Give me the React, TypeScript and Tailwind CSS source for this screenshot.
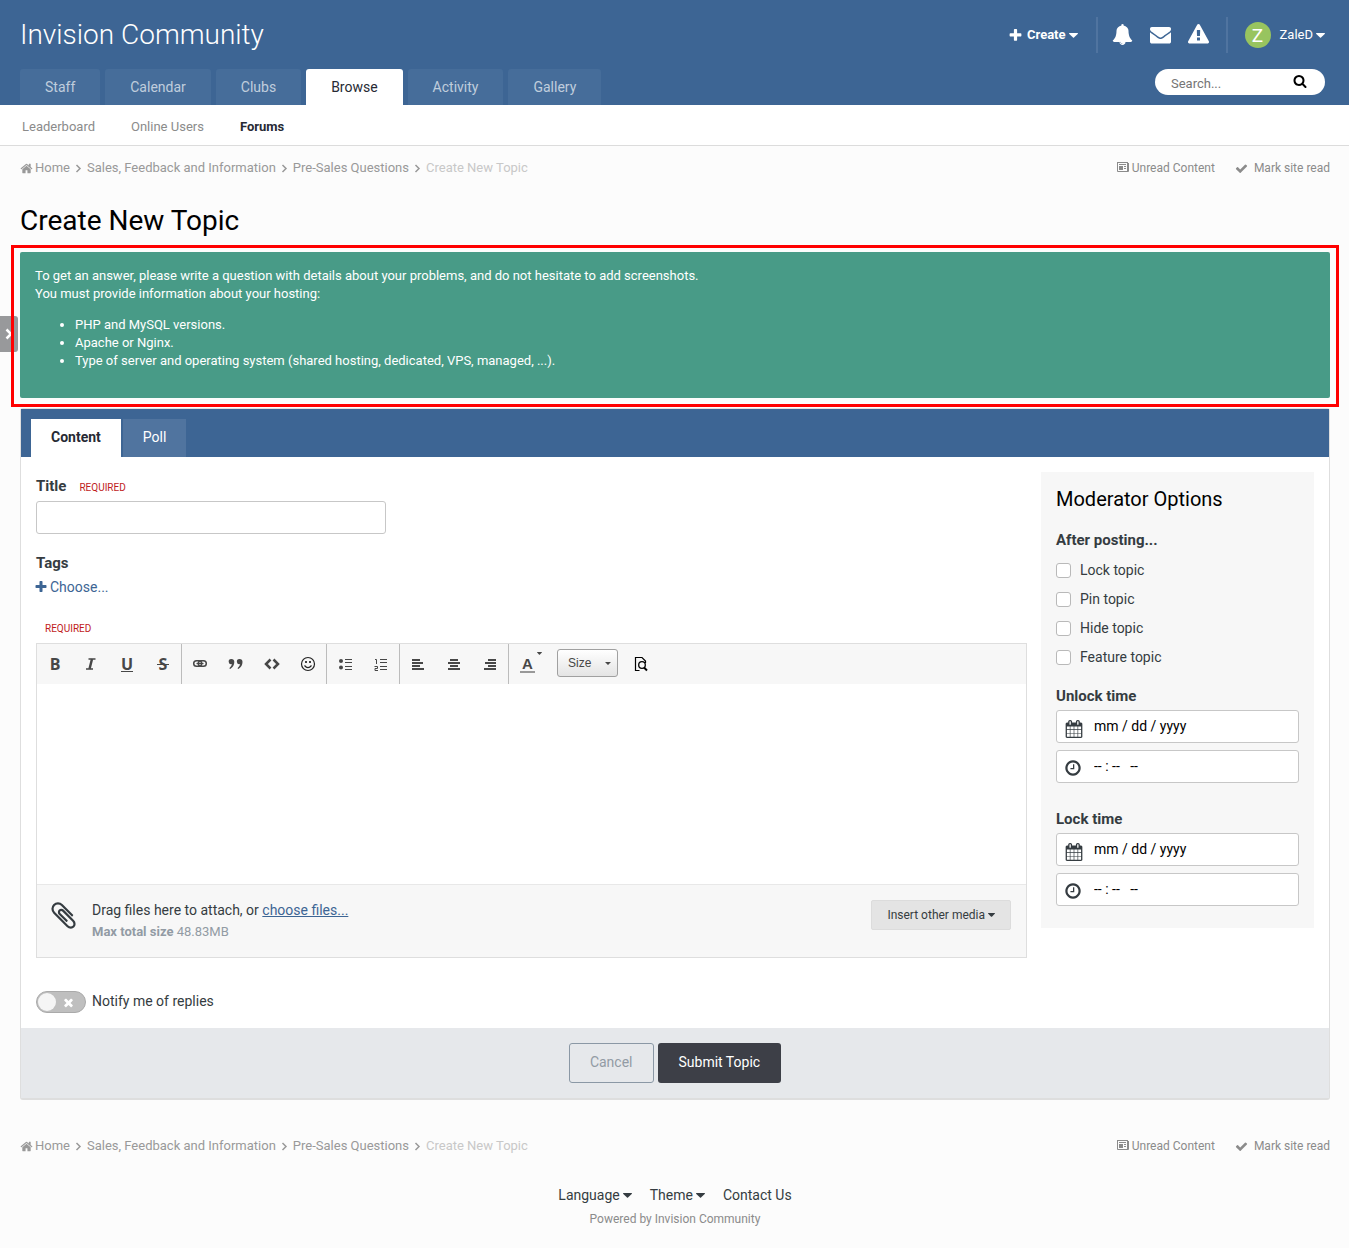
import React from "react";

const ICONS = {
  plus: "M1600 736v192q0 40-28 68t-68 28h-416v416q0 40-28 68t-68 28h-192q-40 0-68-28t-28-68v-416h-416q-40 0-68-28t-28-68v-192q0-40 28-68t68-28h416v-416q0-40 28-68t68-28h192q40 0 68 28t28 68v416h416q40 0 68 28t28 68z",
  search:
    "M1216 832q0-185-131.5-316.5t-316.5-131.5-316.5 131.5-131.5 316.5 131.5 316.5 316.5 131.5 316.5-131.5 131.5-316.5zm512 832q0 52-38 90t-90 38q-54 0-90-38l-343-342q-179 124-399 124-143 0-273.5-55.5t-225-150-150-225-55.5-273.5 55.5-273.5 150-225 225-150 273.5-55.5 273.5 55.5 225 150 150 225 55.5 273.5q0 220-124 399l343 343q37 37 37 90z",
  home: "M1472 992v480q0 26-19 45t-45 19h-384v-384h-256v384h-384q-26 0-45-19t-19-45v-480q0-1 .5-3t.5-3l575-474 575 474q1 2 1 6zm223-69l-62 74q-8 9-21 11h-3q-13 0-21-7l-692-577-692 577q-12 8-24 7-13-2-21-11l-62-74q-8-10-7-23.5t11-21.5l719-599q32-26 76-26t76 26l244 204v-195q0-14 9-23t23-9h192q14 0 23 9t9 23v408l219 182q10 8 11 21.5t-7 23.5z",
  check:
    "M1671 566q0 40-28 68l-724 724-136 136q-28 28-68 28t-68-28l-136-136-362-362q-28-28-28-68t28-68l136-136q28-28 68-28t68 28l294 295 656-657q28-28 68-28t68 28l136 136q28 28 28 68z",
  envelope:
    "M1792 710v794q0 66-47 113t-113 47h-1472q-66 0-113-47t-47-113v-794q44 49 101 87 362 246 497 345 57 42 92.5 65.5t94.5 48 110 24.5h2q51 0 110-24.5t94.5-48 92.5-65.5q170-123 498-345 57-39 100-87zm0-294q0 79-49 151t-122 123q-376 261-468 325-10 7-42.5 31t-54 38.5-52 32.5-57.5 27-50 9h-2q-23 0-50-9t-57.5-27-52-32.5-54-38.5-42.5-31q-91-64-262-182.5t-205-142.5q-62-42-117-115.5t-55-136.5q0-78 41.5-130t118.5-52h1472q65 0 112.5 47t47.5 113z",
  warning:
    "M1024 1375v-190q0-14-9.5-23.5t-22.5-9.5h-192q-13 0-22.5 9.5t-9.5 23.5v190q0 14 9.5 23.5t22.5 9.5h192q13 0 22.5-9.5t9.5-23.5zm-2-374l18-459q0-12-10-19-13-11-24-11h-220q-11 0-24 11-10 7-10 21l17 457q0 10 10 16.5t24 6.5h185q14 0 23.5-6.5t10.5-16.5zm-14-934l768 1408q35 63-2 126-17 29-46.5 46t-63.5 17h-1536q-34 0-63.5-17t-46.5-46q-37-63-2-126l768-1408q17-31 47-49t65-18 65 18 47 49z",
  bell: "M912 1696q0-16-16-16-59 0-101.5-42.5t-42.5-101.5q0-16-16-16t-16 16q0 73 51.5 124.5t124.5 51.5q16 0 16-16zm816-288q0 52-38 90t-90 38h-448q0 106-75 181t-181 75-181-75-75-181h-448q-52 0-90-38t-38-90q50-42 91-88t85-119.5 74.5-158.5 50-206 19.5-260q0-152 117-282.5t307-158.5q-8-19-8-39 0-40 28-68t68-28 68 28 28 68q0 20-8 39 190 28 307 158.5t117 282.5q0 139 19.5 260t50 206 74.5 158.5 85 119.5 91 88z",
  calendar:
    "M192 1664h288v-288h-288v288zm352 0h320v-288h-320v288zm-352-352h288v-320h-288v320zm352 0h320v-320h-320v320zm-352-384h288v-288h-288v288zm736 736h320v-288h-320v288zm-384-736h320v-288h-320v288zm768 736h288v-288h-288v288zm-384-352h320v-320h-320v320zm-352-864v-288q0-13-9.5-22.5t-22.5-9.5h-64q-13 0-22.5 9.5t-9.5 22.5v288q0 13 9.5 22.5t22.5 9.5h64q13 0 22.5-9.5t9.5-22.5zm736 864h288v-320h-288v320zm-384-384h320v-288h-320v288zm384 0h288v-288h-288v288zm32-480v-288q0-13-9.5-22.5t-22.5-9.5h-64q-13 0-22.5 9.5t-9.5 22.5v288q0 13 9.5 22.5t22.5 9.5h64q13 0 22.5-9.5t9.5-22.5zm384-64v1280q0 52-38 90t-90 38h-1408q-52 0-90-38t-38-90v-1280q0-52 38-90t90-38h128v-96q0-66 47-113t113-47h64q66 0 113 47t47 113v96h384v-96q0-66 47-113t113-47h64q66 0 113 47t47 113v96h128q52 0 90 38t38 90z",
  clock:
    "M1024 544v448q0 14-9 23t-23 9h-320q-14 0-23-9t-9-23v-64q0-14 9-23t23-9h224v-352q0-14 9-23t23-9h64q14 0 23 9t9 23zm416 352q0-148-73-273t-198-198-273-73-273 73-198 198-73 273 73 273 198 198 273 73 273-73 198-198 73-273zm224 0q0 209-103 385.5t-279.5 279.5-385.5 103-385.5-103-279.5-279.5-103-385.5 103-385.5 279.5-279.5 385.5-103 385.5 103 279.5 279.5 103 385.5z",
  newspaper:
    "M1024 512h-384v384h384v-384zm128 640v128h-640v-128h640zm0-768v640h-640v-640h640zm640 768v128h-512v-128h512zm0-256v128h-512v-128h512zm0-256v128h-512v-128h512zm0-256v128h-512v-128h512zm-1536 960v-960h-128v960q0 26 19 45t45 19 45-19 19-45zm1664 0v-1088h-1536v1088q0 33-11 64h1483q26 0 45-19t19-45zm128-1216v1216q0 80-56 136t-136 56h-1664q-80 0-136-56t-56-136v-1088h256v-128h1792z",
  paperclip:
    "M1596 1385q0 117-79 196t-196 79q-135 0-235-100l-777-776q-113-115-113-271 0-159 110-270t269-111q158 0 273 113l605 606q10 10 10 22 0 16-30.5 46.5t-46.5 30.5q-13 0-23-10l-606-607q-79-77-181-77-106 0-179 75t-73 181q0 105 76 181l776 777q63 63 145 63 64 0 106-42t42-106q0-82-63-145l-581-581q-26-24-60-24-29 0-48 19t-19 48q0 32 25 59l410 410q10 10 10 22 0 16-31 47t-47 31q-12 0-22-10l-410-410q-63-61-63-149 0-82 57-139t139-57q88 0 149 63l581 581q100 98 100 235z",
  times:
    "M1490 1322q0 40-28 68l-136 136q-28 28-68 28t-68-28l-294-294-294 294q-28 28-68 28t-68-28l-136-136q-28-28-28-68t28-68l294-294-294-294q-28-28-28-68t28-68l136-136q28-28 68-28t68 28l294 294 294-294q28-28 68-28t68 28l136 136q28 28 28 68t-28 68l-294 294 294 294q28 28 28 68z",
  angle:
    "M1171 960q0 13-10 23l-466 466q-10 10-23 10t-23-10l-50-50q-10-10-10-23t10-23l393-393-393-393q-10-10-10-23t10-23l50-50q10-10 23-10t23 10l466 466q10 10 10 23z",
};

type IconProps = { name: keyof typeof ICONS; className?: string };

const Icon = ({ name, className = "" }: IconProps) => (
  <svg
    viewBox={name === "newspaper" ? "0 0 2048 1792" : "0 0 1792 1792"}
    fill="currentColor"
    aria-hidden="true"
    className={`shrink-0 ${className}`}
  >
    <path d={ICONS[name]} />
  </svg>
);

const Caret = ({ className = "w-[9px] h-[5px]" }) => (
  <svg viewBox="0 0 9 5" fill="currentColor" aria-hidden="true" className={`shrink-0 ${className}`}>
    <path d="M.3 0h8.4q.5.3 0 .9L5 4.6q-.5.4-1 0L.3.9Q-.2.3.3 0z" />
  </svg>
);

const Separator = () => (
  <svg viewBox="0 0 13 13" fill="none" stroke="currentColor" strokeWidth="1.5" aria-hidden="true" className="mx-[2px] size-[13px] shrink-0">
    <path d="M4.500 3L8 6.500L4.500 10" />
  </svg>
);

const tabs = ["Staff", "Calendar", "Clubs", "Browse", "Activity", "Gallery"];

const Header = () => (
  <header className="bg-[#3d6594] pl-5 pr-6">
    <div className="flex h-[69px] items-center justify-between">
      <a href="#" className="text-[28px] leading-[36px] font-light text-white">
        Invision Community
      </a>
      <div className="flex items-center text-[13px] text-white">
        <button className="flex items-center pt-px font-bold">
          <Icon name="plus" className="mr-1 size-[15px]" />
          Create
          <Caret className="ml-[3px] h-[5px] w-[9px]" />
        </button>
        <div className="ml-[18px] flex h-9 items-center gap-[17px] border-x-2 border-[#5074a0] pr-[17px] pl-[14px]">
          <button aria-label="Notifications">
            <Icon name="bell" className="size-[21px]" />
          </button>
          <button aria-label="Messages">
            <Icon name="envelope" className="size-[21px]" />
          </button>
          <button aria-label="Reports">
            <Icon name="warning" className="size-[21px]" />
          </button>
        </div>
        <button className="ml-[17px] flex items-center pt-px">
          <span className="mr-[9px] flex size-[26px] items-center justify-center rounded-full bg-[#98c45f] text-[19px] leading-none">
            Z
          </span>
          ZaleD
          <Caret className="ml-[3px] h-[5px] w-[9px]" />
        </button>
      </div>
    </div>
    <div className="flex items-start justify-between">
      <nav className="flex gap-[5px] text-sm">
        {tabs.map((tab) => (
          <a
            key={tab}
            href="#"
            className={`flex h-9 items-center rounded-t-[3px] px-[25px] ${
              tab === "Browse" ? "bg-white text-[#272a34]" : "bg-[#466d9a] text-[#c0cddd]"
            }`}
          >
            {tab}
          </a>
        ))}
      </nav>
      <form className="flex h-[26px] w-[170px] items-center rounded-full bg-white pr-[18px] pl-4">
        <input
          type="search"
          aria-label="Search"
          placeholder="Search..."
          className="min-w-0 grow pt-[3px] text-[13px] text-black outline-none placeholder:text-[#757575]"
        />
        <button type="button" aria-label="Submit search" className="pb-[3px]">
          <Icon name="search" className="size-[14px] text-black" />
        </button>
      </form>
    </div>
  </header>
);

const Breadcrumb = () => (
  <div className="flex h-5 items-center justify-between text-[13px] text-[#999]">
    <nav className="flex items-center" aria-label="Breadcrumb">
      <a href="#" className="flex items-center">
        <Icon name="home" className="mr-[2px] size-[13px]" />
        Home
      </a>
      <Separator />
      <a href="#">Sales, Feedback and Information</a>
      <Separator />
      <a href="#">Pre-Sales Questions</a>
      <Separator />
      <span className="text-[#c8c8c8]">Create New Topic</span>
    </nav>
    <div className="flex items-center text-xs text-[#8b8b8b]">
      <a href="#" className="flex items-center">
        <svg viewBox="0 0 12 10" fill="currentColor" aria-hidden="true" className="mr-[3px] mb-[2px] h-[10px] w-3">
          <path fillRule="evenodd" d="M0 0h11v1h1v8q0 1-1 1H1Q0 10 0 9zM1 1v8h9V1z" />
          <path d="M2 2h7v1H2zM2 4h4v4H2zM7 4h2v1H7zM7 6h2v1H7zM10 1h1v8h-1z" />
        </svg>
        Unread Content
      </a>
      <a href="#" className="ml-5 flex items-center">
        <Icon name="check" className="mr-[6px] size-[13px]" />
        Mark site read
      </a>
    </div>
  </div>
);

const ToolButton = ({ label, children }: { label: string; children: React.ReactNode }) => (
  <button
    type="button"
    aria-label={label}
    className="flex h-10 w-9 items-center justify-center font-['Open_Sans',sans-serif] text-base leading-none font-bold"
  >
    {children}
  </button>
);

const Lines = ({ rows }: { rows: number[][] }) => (
  <svg viewBox="0 0 16 16" className="size-4" stroke="currentColor" strokeWidth="2">
    {rows.map(([x1, x2], i) => (
      <path key={i} d={`M${x1} ${4 + i * 3}H${x2}`} />
    ))}
  </svg>
);

const Toolbar = () => (
  <div className="flex h-10 bg-[#f7f7f7] text-[#474747]">
    <div className="flex border-r border-[#bcbcbc]">
      <ToolButton label="Bold">B</ToolButton>
      <ToolButton label="Italic">
        <svg viewBox="0 0 16 16" className="size-4" stroke="currentColor" fill="none">
          <path d="M5.500 3h7M3 13h7" strokeWidth="1.600" />
          <path d="M9 3l-2.500 10" strokeWidth="2.400" />
        </svg>
      </ToolButton>
      <ToolButton label="Underline">
        <span className="border-b border-current leading-[14px]">U</span>
      </ToolButton>
      <ToolButton label="Strikethrough">
        <span className="relative">
          S
          <span className="absolute -inset-x-[2px] top-1/2 h-px bg-current" />
        </span>
      </ToolButton>
    </div>
    <div className="flex border-r border-[#bcbcbc]">
      <ToolButton label="Link">
        <svg viewBox="0 0 16 16" className="size-4" stroke="currentColor" fill="none" strokeWidth="1.500">
          <rect x="1.700" y="4.700" width="8" height="5.600" rx="2.800" />
          <rect x="6.300" y="4.700" width="8" height="5.600" rx="2.800" />
          <path d="M4.500 7.500h7" strokeWidth="1.200" />
        </svg>
      </ToolButton>
      <ToolButton label="Quote">
        <svg viewBox="0 0 16 16" className="size-4" fill="currentColor">
          <path d="M3.300 3a2.600 2.600 0 1 0 .7 5.100Q3.600 10.300 1.300 12.200l.9.800Q6.300 10.300 6.300 6 6.300 3 3.300 3zM11.500 3a2.600 2.600 0 1 0 .7 5.100q-.4 2.200-2.700 4.100l.9.800q4.100-2.700 4.100-7 0-3-3-3z" />
        </svg>
      </ToolButton>
      <ToolButton label="Code">
        <svg viewBox="0 0 16 16" className="size-4" stroke="currentColor" fill="none" strokeWidth="2.500">
          <path d="M6.500 3.500L2 8l4.500 4.500M9.500 3.500L14 8l-4.500 4.500" />
        </svg>
      </ToolButton>
      <ToolButton label="Emoji">
        <svg viewBox="0 0 16 16" className="size-4" stroke="#222" fill="none" strokeWidth="1.200">
          <circle cx="8" cy="8" r="6.500" />
          <path d="M4.500 9.500Q8 13.800 11.500 9.500" />
          <path d="M6 5v2M10 5v2" strokeWidth="1.700" />
        </svg>
      </ToolButton>
    </div>
    <div className="flex border-r border-[#bcbcbc]">
      <ToolButton label="Bulleted list">
        <svg viewBox="0 0 16 16" className="size-4" fill="currentColor">
          <circle cx="4" cy="5" r="2" />
          <circle cx="4" cy="11.500" r="2" />
          <path d="M8 3h7v1H8zM8 6h7v1H8zM8 10h7v1H8zM8 13h7v1H8z" />
        </svg>
      </ToolButton>
      <ToolButton label="Numbered list">
        <svg viewBox="0 0 16 16" className="size-4" fill="none" stroke="currentColor">
          <path d="M7 3.500h7M7 6.500h7M7 10.500h7M7 13.500h7" />
          <path d="M2 3.500h1.500V8M1.500 10.500h3v2h-2.500v2h3" />
        </svg>
      </ToolButton>
    </div>
    <div className="flex border-r border-[#bcbcbc]">
      <ToolButton label="Align left">
        <Lines rows={[[2, 10], [2, 13], [2, 10], [2, 14]]} />
      </ToolButton>
      <ToolButton label="Align center">
        <Lines rows={[[4, 12], [2, 14], [4, 12], [2, 14]]} />
      </ToolButton>
      <ToolButton label="Align right">
        <Lines rows={[[6, 14], [3, 14], [6, 14], [2, 14]]} />
      </ToolButton>
    </div>
    <div className="flex items-center">
      <button
        type="button"
        aria-label="Text color"
        className="flex h-10 w-12 items-start pt-2 pl-[11px] font-['Liberation_Sans',Arial,sans-serif] text-[15px] font-bold"
      >
        <span className="mt-1 w-[15px] border-b-2 border-[#999] text-center leading-[15px]">A</span>
        <Caret className="ml-[2px] h-[3px] w-[5px]" />
      </button>
      <label className="relative flex items-center pb-[2px]">
        <select
          aria-label="Size"
          className="h-7 w-[61px] appearance-none rounded-[3px] border border-[#a0a0a0] bg-linear-to-b from-white to-[#e4e4e4] pl-[10px] font-['Liberation_Sans',Arial,sans-serif] text-xs"
        >
          <option>Size</option>
        </select>
        <Caret className="pointer-events-none absolute right-[7px] h-[3px] w-[6px]" />
      </label>
      <span className="ml-[5px]">
        <ToolButton label="Preview">
          <svg viewBox="0 0 16 16" className="size-4 text-black" fill="none" stroke="currentColor">
            <path d="M6.500 14.500h-4v-13h6.500l3.500 3.500v2" strokeWidth="1.200" />
            <circle cx="9" cy="9" r="3.300" strokeWidth="1.300" />
            <path d="M11 11.500l3 3" strokeWidth="2" />
          </svg>
        </ToolButton>
      </span>
    </div>
  </div>
);

const TimeFields = ({ label }: { label: string }) => (
  <fieldset>
    <legend className="text-[15px] leading-5 font-bold">{label}</legend>
    <div className="mt-1 flex h-[33px] items-center rounded-[3px] border border-[#c7c7c7] bg-white pl-2">
      <Icon name="calendar" className="mt-[5px] size-[18px]" />
      <input
        aria-label={`${label} date`}
        placeholder="mm / dd / yyyy"
        className="ml-[11px] min-w-0 grow pb-px text-sm outline-none placeholder:text-black"
      />
    </div>
    <div className="mt-[7px] flex h-[33px] items-center rounded-[3px] border border-[#c7c7c7] bg-white pl-[7px]">
      <Icon name="clock" className="mt-[3px] size-[18px]" />
      <input
        aria-label={`${label} hour`}
        placeholder="-- : --   --"
        className="ml-3 min-w-0 grow pb-px text-sm outline-none placeholder:text-black"
      />
    </div>
  </fieldset>
);

const modOptions = ["Lock topic", "Pin topic", "Hide topic", "Feature topic"];

const ModeratorOptions = () => (
  <aside className="w-[273px] shrink-0 self-start bg-[#f7f7f7] px-[15px] pt-[15px] pb-[22px]">
    <h2 className="text-xl leading-6 text-black">Moderator Options</h2>
    <h3 className="mt-[19px] text-[15px] leading-5 font-bold">After posting...</h3>
    <div className="mt-[6px] mb-[14px]">
      {modOptions.map((option) => (
        <label key={option} className="flex h-[29px] items-center text-sm">
          <input
            type="checkbox"
            className="mr-[9px] size-[15px] appearance-none rounded-[3px] border border-[#b9b9b9] bg-white"
          />
          <span className="pb-[2px]">{option}</span>
        </label>
      ))}
    </div>
    <TimeFields label="Unlock time" />
    <div className="h-[26px]" />
    <TimeFields label="Lock time" />
  </aside>
);

const App = () => {
  return (
    <div className="relative min-h-screen bg-[#fcfcfc] font-[Roboto,sans-serif] text-[#353c41]">
      <Header />
      <nav className="flex h-[41px] items-center gap-9 border-b border-[#dcdcdc] bg-white pt-[3px] pl-[22px] text-[13px] text-[#8b8b8b]">
        <a href="#">Leaderboard</a>
        <a href="#">Online Users</a>
        <a href="#" className="font-bold text-[#272a34]">
          Forums
        </a>
      </nav>
      <button
        aria-label="Open sidebar"
        className="absolute top-[316px] left-0 flex h-9 w-[18px] items-center justify-center rounded-r-[3px] bg-[#98999b] text-white"
      >
        <svg viewBox="0 0 8 12" className="h-3 w-2" fill="none" stroke="currentColor" strokeWidth="2.500">
          <path d="M1.500 1.500L6 6l-4.500 4.500" />
        </svg>
      </button>

      <main className="pt-3 pr-[19px] pb-6 pl-5">
        <Breadcrumb />
        <h1 className="mt-[26px] text-[28px] leading-[34px] text-black">Create New Topic</h1>

        <div className="relative mt-[14px] rounded-[2px] bg-[#489b87] p-[15px] text-[13px] leading-[18px] text-white">
          <p>
            To get an answer, please write a question with details about your problems, and do not
            hesitate to add screenshots.
            <br />
            You must provide information about your hosting:
          </p>
          <ul className="my-[13px] list-disc pl-10">
            <li>PHP and MySQL versions.</li>
            <li>Apache or Nginx.</li>
            <li>Type of server and operating system (shared hosting, dedicated, VPS, managed, ...).</li>
          </ul>
          <div className="pointer-events-none absolute -inset-x-[9px] -top-[7px] -bottom-[9px] border-3 border-[#f00]" />
        </div>

        <form className="mt-[10px] rounded-[3px] border border-b-2 border-[#dedede] bg-white">
          <div className="flex h-12 items-end gap-[2px] bg-[#3d6594] pl-[10px] text-sm">
            <button type="button" className="h-[38px] bg-white px-5 pb-[2px] font-bold text-[#272a34]">
              Content
            </button>
            <button type="button" className="h-[38px] bg-[#50749f] px-5 pb-[2px] text-white">
              Poll
            </button>
          </div>

          <div className="flex gap-[14px] p-[15px]">
            <div className="min-w-0 grow">
              <div className="flex items-center pt-1">
                <label htmlFor="title" className="text-[15px] leading-5 font-bold">
                  Title
                </label>
                <span className="ml-[13px] pt-[3px] text-[10px] leading-4 text-[#c01c1c]">REQUIRED</span>
              </div>
              <input
                id="title"
                className="mt-[5px] block h-[33px] w-[350px] rounded-[3px] border border-[#c7c7c7] bg-white px-2 text-sm outline-none"
              />
              <h3 className="mt-[19px] text-[15px] leading-5 font-bold">Tags</h3>
              <a href="#" className="mt-1 flex items-center text-sm leading-5 text-[#3d6594]">
                <Icon name="plus" className="-ml-[2px] mr-[2px] size-[14px]" />
                Choose...
              </a>
              <p className="mt-6 ml-[9px] text-[10px] leading-4 text-[#c01c1c]">REQUIRED</p>

              <div className="mt-[6px] border border-[#dedede]">
                <Toolbar />
                <textarea aria-label="Message" className="block h-[200px] w-full resize-none p-4 text-sm outline-none" />
                <div className="flex h-[73px] items-start border-t border-[#e8e8e8] bg-[#f7f7f7] px-[15px] pt-[15px]">
                  <Icon name="paperclip" className="-ml-1 size-[31px]" />
                  <div className="ml-[13px]">
                    <p className="text-sm leading-5">
                      Drag files here to attach, or{" "}
                      <a href="#" className="text-[#3d6594] underline">
                        choose files...
                      </a>
                    </p>
                    <p className="mt-[2px] text-[13px] leading-5 text-[#929ba4]">
                      <b>Max total size</b> 48.83MB
                    </p>
                  </div>
                  <button
                    type="button"
                    className="ml-auto flex h-[30px] items-center rounded-[2px] border border-[#dcdcdc] bg-[#e4e4e4] px-[15px] text-xs"
                  >
                    Insert other media
                    <Caret className="ml-[3px] h-1 w-[7px]" />
                  </button>
                </div>
              </div>

              <label className="mt-[33px] flex items-center text-sm">
                <input type="checkbox" className="peer sr-only" />
                <span className="mr-[6px] flex h-[22px] w-[50px] items-center rounded-full border border-[#aaa] bg-[#bfbfbf] pl-px text-white">
                  <span className="mr-[6px] size-[18px] rounded-full bg-[#f5f5f5]" />
                  <Icon name="times" className="size-[13px]" />
                </span>
                <span className="pb-[2px]">Notify me of replies</span>
              </label>
            </div>
            <ModeratorOptions />
          </div>

          <div className="flex justify-center gap-1 bg-[#e6e8eb] py-[15px] text-sm">
            <button type="button" className="h-10 rounded-[3px] border border-[#8b98a5] px-5 pb-[2px] text-[#929ba4]">
              Cancel
            </button>
            <button type="button" className="h-10 rounded-[3px] bg-[#3d3f47] px-[21px] pb-[2px] text-white">
              Submit Topic
            </button>
          </div>
        </form>

        <div className="mt-9">
          <Breadcrumb />
        </div>
        <footer className="mt-[29px] flex flex-col items-center">
          <div className="flex gap-[18px] text-sm leading-5">
            <button className="flex items-center">
              Language
              <Caret className="ml-[3px] h-[5px] w-[9px]" />
            </button>
            <button className="flex items-center">
              Theme
              <Caret className="ml-[3px] h-[5px] w-[9px]" />
            </button>
            <a href="#">Contact Us</a>
          </div>
          <a href="#" className="mt-[6px] text-xs leading-4 text-[#8b8b8b]">
            Powered by Invision Community
          </a>
        </footer>
      </main>
    </div>
  );
};

export default App;
